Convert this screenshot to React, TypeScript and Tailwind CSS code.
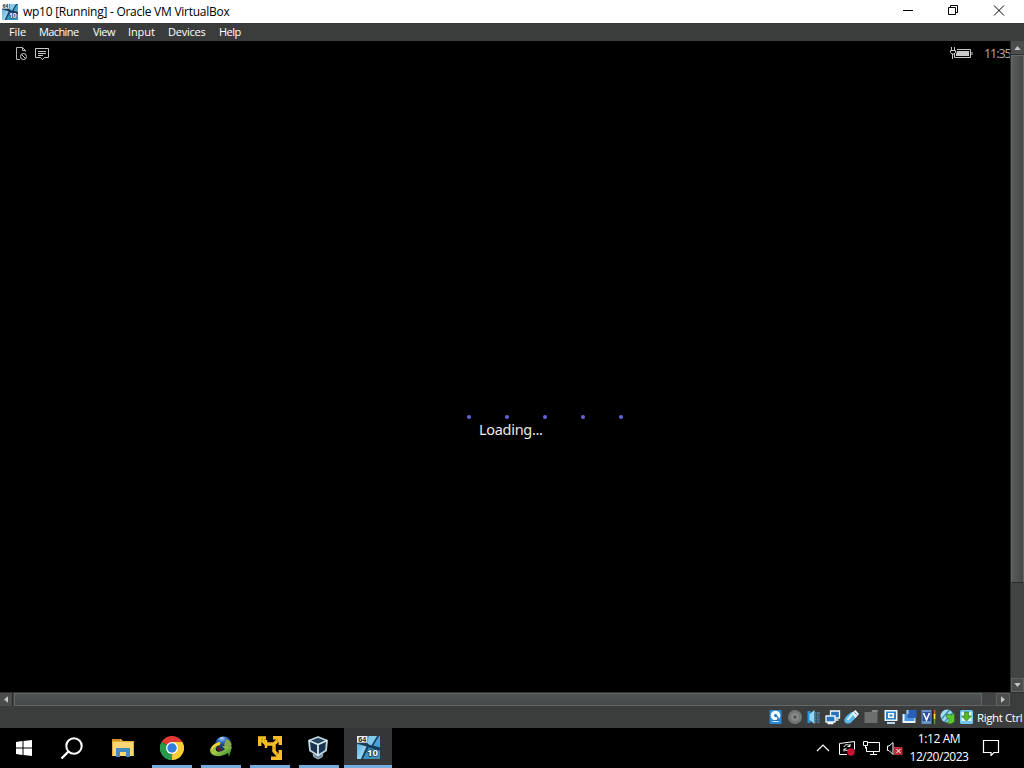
import React from "react";

const menuItems = [
  { label: "File", width: "w-[30px]", tracking: "tracking-[-0.1px]" },
  { label: "Machine", width: "w-[54px]", tracking: "tracking-[-0.6px]" },
  { label: "View", width: "w-[35px]", tracking: "tracking-[-0.5px]" },
  { label: "Input", width: "w-[40px]", tracking: "tracking-[-0.1px]" },
  { label: "Devices", width: "w-[51px]", tracking: "tracking-[-0.25px]" },
  { label: "Help", width: "w-[30px]", tracking: "tracking-[-0.55px]" },
];

const Win10Icon = ({ className }: { className: string }) => (
  <svg viewBox="0 0 24 24" className={className}>
    <defs>
      <linearGradient id="glass" x1="0" y1="0" x2="1" y2="1">
        <stop offset="0" stopColor="#5eb0dd" />
        <stop offset="1" stopColor="#b9e8fa" />
      </linearGradient>
    </defs>
    <rect width="24" height="24" fill="#173c59" />
    <path d="M0 8l10 3-6 13H0z" fill="url(#glass)" />
    <path d="M12 0h9l-6 10-4-2z" fill="#83c9ed" />
    <path d="M23 0h1v12l-7-2z" fill="#4aa3d5" />
    <path d="M12 12l12 3v9H6z" fill="#3d91c4" />
    <path d="M0 0h11v7H0z" fill="#e8eef2" />
    <text x="1.200" y="6.300" fontSize="7.500" fontWeight="700" fontFamily="Liberation Sans, sans-serif" fill="#1b2830">64</text>
    <text x="10.500" y="20.500" fontSize="10" fontWeight="700" fontFamily="Open Sans, sans-serif" fill="#fff" stroke="#15354c" strokeWidth="1.500" paintOrder="stroke">10</text>
  </svg>
);

const TitleBar = () => (
  <div className="flex h-[23px] shrink-0 items-center bg-white text-black">
    <Win10Icon className="ml-[2px] h-4 w-4" />
    <span className="ml-[5px] flex-1 whitespace-nowrap pt-px text-[12px] tracking-[-0.26px]">
      wp10 [Running] - Oracle VM VirtualBox
    </span>
    <svg viewBox="0 0 128 23" className="h-[23px] w-32 shrink-0" fill="none" stroke="#000">
      <path d="M7 10.500h10" />
      <path d="M52.500 7.500h7v7h-7zM54.500 7.500v-2h7v7h-2" />
      <path d="M98 5.500l10 10M108 5.500l-10 10" />
    </svg>
  </div>
);

const MenuBar = () => (
  <div className="flex h-[18px] shrink-0 items-center bg-[#3b3d3d] pl-[9px] text-[11px] leading-[18px] text-white">
    {menuItems.map((item) => (
      <div key={item.label} className={`${item.width} shrink-0 whitespace-nowrap ${item.tracking}`}>
        {item.label}
      </div>
    ))}
  </div>
);

const PhoneStatus = () => (
  <div className="flex h-[25px] items-center">
    <svg viewBox="0 0 36 16" className="ml-[15px] h-4 w-9" fill="none" stroke="#c9c9c9">
      <path d="M5 13.500H1.500v-12h6l3 3v1M7.500 1.500v3h3" strokeWidth=".9" />
      <circle cx="8.500" cy="10.500" r="3" />
      <path d="M6.500 8.500l4 4" />
      <path d="M20.500 2.500h13v9h-4l-2 2.200-2-2.200h-5zM23 5.500h8M23 7.500h8M23 9.500h5" />
    </svg>
    <div className="flex-1" />
    <svg viewBox="0 0 24 14" className="h-[14px] w-6" fill="none" stroke="#c9c9c9">
      <path d="M2.500 0v3M5.500 0v3M1.500 3.500h5v2l-1.500 1.500h-2l-1.500-1.500zM3.500 7v5" />
      <path d="M8 2.500h13.500v8H5.500V7M23 5v3" />
      <path d="M8 4h12v5H7V7z" fill="#c9c9c9" stroke="none" />
    </svg>
    <span className="ml-[11px] w-[26px] whitespace-nowrap pt-px font-['Noto_Sans','Open_Sans',sans-serif] text-[12.500px] tracking-[-1.050px] text-[#a5a5a5]">
      11:35
    </span>
  </div>
);

const Screen = () => (
  <div className="min-w-0 flex-1 bg-black">
    <PhoneStatus />
    <div className="ml-[467px] mt-[349px] flex w-[156px] justify-between">
      {[0, 1, 2, 3, 4].map((dot) => (
        <div key={dot} className="h-[4px] w-[4px] rounded-full bg-[#6264dc]" />
      ))}
    </div>
    <div className="ml-[479px] whitespace-nowrap font-['Noto_Sans','Open_Sans',sans-serif] text-[14.500px] leading-5 tracking-[-0.3px] text-[#e8e8e8]">
      Loading...
    </div>
  </div>
);

const VerticalScroll = () => (
  <div className="flex w-[14px] shrink-0 flex-col border-l border-[#292b2b] bg-[#424444]">
    <div className="flex h-[14px] items-center justify-center border-b border-[#303232] bg-[#4b4d4d]">
      <svg viewBox="0 0 8 5" className="mr-px h-1 w-[7px]"><path d="M0 5L4 0l4 5z" fill="#c5c7c7" /></svg>
    </div>
    <div className="h-[528px] border border-[#646666] border-b-[#292b2b] bg-linear-to-r from-[#5a5c5c] to-[#454848]" />
    <div className="flex-1" />
    <div className="flex h-[14px] items-center justify-center border border-[#606262] bg-[#4b4d4d]">
      <svg viewBox="0 0 8 5" className="mr-px h-1 w-[7px]"><path d="M0 0h8L4 5z" fill="#c5c7c7" /></svg>
    </div>
  </div>
);

const HorizontalScroll = () => (
  <div className="flex h-[14px] shrink-0 border-t border-[#303232] bg-[#424444]">
    <div className="flex w-[13px] items-center justify-center border-r border-[#292b2b] bg-[#4b4d4d]">
      <svg viewBox="0 0 5 8" className="mb-px h-[7px] w-1"><path d="M5 0v8L0 4z" fill="#c5c7c7" /></svg>
    </div>
    <div className="ml-px w-[968px] border border-[#646666] bg-linear-to-b from-[#505353] to-[#464949]" />
    <div className="w-[14px] border-b border-[#555757]" />
    <div className="flex w-[14px] items-center justify-center border border-[#606262] bg-[#4b4d4d]">
      <svg viewBox="0 0 5 8" className="mb-px h-[7px] w-1"><path d="M0 0v8l5-4z" fill="#c5c7c7" /></svg>
    </div>
    <div className="flex-1 bg-[#3b3d3d]" />
  </div>
);

const StatusBar = () => (
  <div className="flex h-[22px] shrink-0 items-center bg-[#3b3d3d]">
    <div className="ml-[766px] grid shrink-0 grid-cols-[repeat(11,19.1px)] [&_svg]:h-4 [&_svg]:w-[19px]">
      {/* hard disk */}
      <svg viewBox="0 0 18 16">
        <rect x="3" y="1" width="12" height="14" rx="1" fill="#278bd7" />
        <circle cx="9" cy="6.500" r="4.800" fill="#f3faff" />
        <circle cx="9" cy="6.500" r="1.500" fill="#2379bb" />
        <path d="M9.500 7c3 1 3 4 0 5H7" fill="none" stroke="#1865a5" strokeWidth="1.300" />
        <path d="M6 12.500h6" stroke="#d4edfc" />
      </svg>
      {/* optical drive */}
      <svg viewBox="0 0 18 16">
        <circle cx="9.500" cy="8" r="7" fill="#747676" />
        <circle cx="9.500" cy="8" r="4" fill="#878989" />
        <circle cx="9.500" cy="8" r="1.600" fill="#4b4d4d" />
      </svg>
      {/* audio */}
      <svg viewBox="0 0 18 16">
        <path d="M3 2h3v12H3z" fill="#2694dd" />
        <path d="M5 5l5-4v14l-5-4z" fill="#8ed8f6" />
        <path d="M10.500 3h5v11h-5z" fill="#54798f" />
        <path d="M12 3v11M14.500 4v9M10 6h6M10 9h6M10 12h6" stroke="#304a59" strokeWidth=".7" />
      </svg>
      {/* network */}
      <svg viewBox="0 0 18 16" stroke="#edf6fb" strokeWidth="1.300">
        <path d="M7 2h9v7H7z" fill="#2673b8" />
        <path d="M2.500 7h9v6h-9zM4 14.500h6M12 11h3" fill="#2673b8" />
      </svg>
      {/* usb */}
      <svg viewBox="0 0 18 16">
        <path d="M3 14c-2-2-1-5 1-7l5-4 5 5-4 4c-2 3-5 3-7 2z" fill="#58b8e9" />
        <path d="M9 4l4-3 3.500 4-3.500 4z" fill="#e8f3fa" />
        <path d="M5 11l5-6" stroke="#c7edff" strokeWidth="2" /><path d="M12 3.500l2 2" stroke="#48799c" />
      </svg>
      {/* shared folders */}
      <svg viewBox="0 0 18 16"><path d="M3 3h7l1-2h5v13H3z" fill="#6d6f6f" /><path d="M10 3l1-2h5v2z" fill="#858787" /></svg>
      {/* display */}
      <svg viewBox="0 0 18 16">
        <path d="M3 1h13v11H3z" fill="#e8f5fc" /><path d="M4.500 2.500h10v8h-10z" fill="#2d86cb" />
        <path d="M6.500 4h6v5h-6z" fill="#fff" /><path d="M8 5.500h3v2H8z" fill="#2d86cb" /><path d="M5.500 13h8v2h-8z" fill="#b8d8e8" />
      </svg>
      {/* recording */}
      <svg viewBox="0 0 18 16">
        <path d="M2 5h13v9H2z" fill="#eaf5ff" /><path d="M4 5h10v7H4z" fill="#4b96df" />
        <path d="M7 1h9v8H7z" fill="#2860b9" /><path d="M6 1h2v4H6z" fill="#a9cceb" />
      </svg>
      {/* cpu */}
      <svg viewBox="0 0 18 16">
        <path d="M2 1h10v14H2z" fill="#6b91cb" /><path d="M3 3h8v9H3z" fill="#294e99" />
        <path d="M4 4l3 7 3-7" fill="none" stroke="#fff" strokeWidth="1.600" />
        <path d="M13 1h3v14h-3z" fill="#000" /><path d="M14 1h2v5h-2z" fill="#ed5b23" /><path d="M14 5h2v5h-2z" fill="#ffd82b" /><path d="M14 10h2v5h-2z" fill="#55a532" />
      </svg>
      {/* mouse integration */}
      <svg viewBox="0 0 18 16">
        <circle cx="8.500" cy="7" r="6.500" fill="#9fdced" />
        <path d="M3 10l8-9M6 13l8-9" stroke="#3a8ebd" strokeWidth="1.500" />
        <path d="M8 5l5 1 3-2v9l-4 2-4-1 3-3-3-3z" fill="#5cc72f" stroke="#236f2a" strokeWidth=".7" />
      </svg>
      {/* keyboard capture */}
      <svg viewBox="0 0 18 16">
        <rect x="2.500" y="1" width="13" height="14" rx="1.500" fill="#71c7ec" /><path d="M4 3h10v9H4z" fill="#e8f8f0" />
        <path d="M7 3h4v4h3l-5 5-5-5h3z" fill="#58b42a" stroke="#28782f" strokeWidth=".7" />
      </svg>
    </div>
    <span className="ml-[1px] whitespace-nowrap pt-px text-[11.500px] tracking-[-0.420px] text-white">Right Ctrl</span>
  </div>
);

const Taskbar = () => (
  <div className="flex h-10 shrink-0 bg-black">
    <div className="flex w-12 items-center justify-center">
      <svg viewBox="0 0 16 16" className="h-4 w-4" fill="#fff"><path d="M0 2l6.500-1v6.500H0zM7.500.9L16 0v7.500H7.500zM0 8.500h6.500V15L0 14zM7.500 8.500H16V16l-8.500-1z" /></svg>
    </div>
    <div className="flex w-12 items-center justify-center">
      <svg viewBox="0 0 24 24" className="h-6 w-6" fill="none" stroke="#fff" strokeWidth="2"><circle cx="14" cy="10" r="7.700" /><path d="M8.500 15.500L1.500 22.500" strokeWidth="2.400" /></svg>
    </div>
    <div className="flex w-[54px] items-center justify-center">
      <svg viewBox="0 0 22 20" className="h-5 w-[22px]">
        <path d="M0 1h9l2 2h11v15H0z" fill="#e3aa35" /><path d="M1 4h20v14H1z" fill="#f8d777" /><path d="M0 1h8v2H0z" fill="#d18e22" />
        <path d="M4 10h14v9h-4v-5H8v5H4z" fill="#408cc3" />
      </svg>
    </div>
    <div className="mx-[2px] flex w-10 items-center justify-center border-b-[3px] border-[#76a9dc] pt-[3px]">
      <svg viewBox="0 0 24 24" className="h-6 w-6">
        <path d="M12 12L1.600 6A12 12 0 0 1 22.400 6z" fill="#e23b32" /><path d="M12 12L22.400 6A12 12 0 0 1 12 24z" fill="#f9cd33" />
        <path d="M12 12v12A12 12 0 0 1 1.600 6z" fill="#289b4b" /><path d="M12 6h10.400L12 24l5-9z" fill="#f9cd33" /><path d="M1.600 6l6 9 5 2-1 7A12 12 0 0 1 1.600 6z" fill="#289b4b" />
        <circle cx="12" cy="12" r="6" fill="#fff" /><circle cx="12" cy="12" r="4.700" fill="#347edb" />
      </svg>
    </div>
    <div className="ml-[7px] flex w-10 items-center justify-center border-b-[3px] border-[#76a9dc] pt-[2px]">
      <svg viewBox="0 0 26 24" className="h-6 w-[26px]">
        <defs>
          <radialGradient id="earth" cx=".4" cy=".1"><stop stopColor="#b5d9ff" /><stop offset=".5" stopColor="#3471c8" /><stop offset="1" stopColor="#173667" /></radialGradient>
          <linearGradient id="swoosh" x1="0" y1="0" x2="1" y2="1"><stop stopColor="#65a63b" /><stop offset=".45" stopColor="#a8c845" /><stop offset="1" stopColor="#168039" /></linearGradient>
        </defs>
        <ellipse cx="15.500" cy="8.500" rx="8.500" ry="8" fill="url(#earth)" />
        <path d="M18 3c4 1 6 4 5 8l-4 2-3-4z" fill="#8ba751" />
        <path d="M12 6C7 7 3 10 2 14c0 7 11 8 18 3l1 4 3-10-10-1 3 3c-3 3-8 4-9 1-1-2 1-5 5-7z" fill="url(#swoosh)" />
        <path d="M12 6c-7 1-10 6-8 9 1-4 4-5 8-6z" fill="#eed231" />
        <path d="M9 11c-1 4 3 5 6 3-2 0-4-1-4-4z" fill="#5b1a16" />
      </svg>
    </div>
    <div className="ml-[9px] flex w-10 items-center justify-center border-b-[3px] border-[#76a9dc] pt-[3px]">
      <svg viewBox="0 0 24 24" className="h-6 w-6" fill="none" stroke="#f7bd24" strokeWidth="3.400">
        <path d="M1.700 10V2H8M2 2l6 6h8l6-6M15 1.700h7.300V9M16 8v7l6 7M13 22.300h9.300V14" />
        <path d="M8 4v8" strokeWidth="2.500" />
        <path d="M12 6v2M19 3v3M14 12h3M19 16v3M4 2v3" stroke="#ce8e13" strokeWidth="1" />
      </svg>
    </div>
    <div className="ml-[9px] flex w-10 items-center justify-center border-b-[3px] border-[#76a9dc] pr-[3px] pt-[2px]">
      <svg viewBox="0 0 22 24" className="h-6 w-[22px]" strokeLinejoin="round">
        <path d="M6 18l1 3 4 2 4-2 1-3" fill="#73899a" stroke="#9bb2c1" />
        <path d="M2 4.500l9-3.500 9 3.500-1 10-8 5-8-5z" fill="#18344e" stroke="#c4d8e5" strokeWidth="1.800" />
        <path d="M2 4.500l9 4 9-4M11 8.500v11" fill="none" stroke="#dcebf3" strokeWidth="1.800" />
        <path d="M5.500 4.500l5.500-2 5.500 2-5.500 2.200z" fill="#294964" />
      </svg>
    </div>
    <div className="ml-[5px] flex w-12 items-center justify-center border-b-[3px] border-[#76a9dc] bg-[#343637] pt-[2px]">
      <Win10Icon className="h-[23px] w-[23px]" />
    </div>
    <div className="flex-1" />
    <svg viewBox="0 0 92 24" className="mt-[8px] h-6 w-[92px] shrink-0" fill="none" stroke="#fff">
      <path d="M1 15l6-6 6 6" strokeWidth="1.200" />
      <path d="M31 18.500h-7.500v-11l15-2v8M28 11c1-3 4-3 6-1M34 8v2.500h-2.500M33 13c-1 2-4 2-5 0M28 15.500v-2.500h2.500" />
      <circle cx="35" cy="16" r="3.700" fill="#c91431" stroke="none" />
      <path d="M52 6.500h11.500v9h-13V11M54 18.500h7M57.500 15.500v3M47.500 5.500h4v4h-4zM49.500 9.500v3" />
      <path d="M71.500 10v4.500H73l4 4v-12L73 10h-1.500" />
      <path d="M78 11h8.500v8H78z" fill="#bd2c36" stroke="none" /><path d="M80.500 13l4 4M84.500 13l-4 4" />
    </svg>
    <div className="ml-[-1px] flex w-[64px] flex-col items-center pt-[2px] text-[12px] leading-[18px] text-white">
      <span className="whitespace-nowrap tracking-[-0.400px]">1:12 AM</span>
      <span className="whitespace-nowrap tracking-[-0.480px]">12/20/2023</span>
    </div>
    <svg viewBox="0 0 18 17" className="ml-[11px] mr-[24px] mt-[11px] h-[17px] w-[18px] shrink-0" fill="none" stroke="#fff"><path d="M1.500 1.500h15v12H12l-3 3v-3H1.500z" strokeWidth="1.200" /></svg>
  </div>
);

export default function App() {
  return (
    <div className="flex h-[768px] w-[1024px] flex-col overflow-hidden bg-black font-['Open_Sans','Noto_Sans',sans-serif]">
      <TitleBar />
      <MenuBar />
      <div className="flex h-[651px] shrink-0">
        <Screen />
        <VerticalScroll />
      </div>
      <HorizontalScroll />
      <StatusBar />
      <Taskbar />
    </div>
  );
}
